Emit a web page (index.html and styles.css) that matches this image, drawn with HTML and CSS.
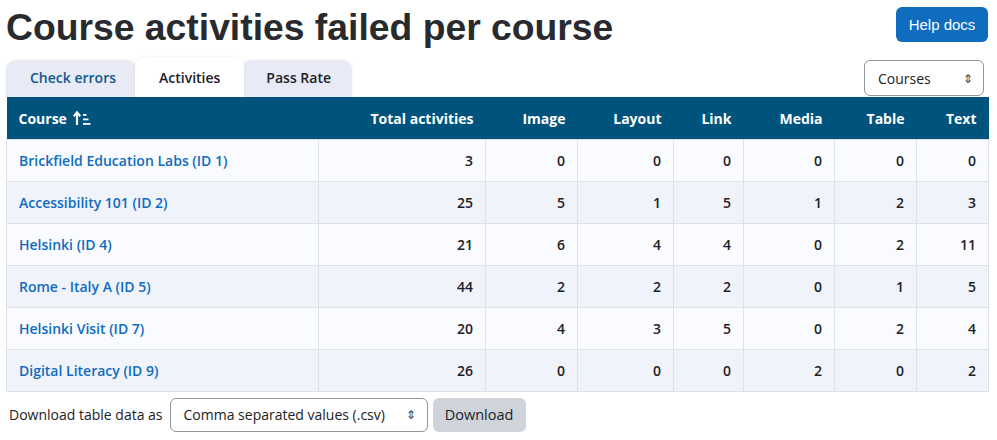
FILE: index.html
```html
<!DOCTYPE html>
<html lang="en">
<head>
    <meta charset="UTF-8">
    <title>Course activities failed per course</title>
    <link rel="stylesheet" href="styles.css">
</head>
<body>
    <div id="container">
        <div class="topbar">
            <h2>Course activities failed per course</h2>
            <button class="btnHelp">Help docs</button>
        </div>
        <div class="tabbar">
            <ul class="tabs">
                <li class="tab">Check errors</li>
                <li class="tab active">Activities</li>
                <li class="tab">Pass Rate</li>
            </ul>
            <div class="selectBox selCourses">Courses <span class="caret">&#8661;</span></div>
        </div>
        <table class="report">
            <colgroup>
                <col style="width:312px"><col style="width:167px"><col style="width:92px"><col style="width:96px">
                <col style="width:70px"><col style="width:91px"><col style="width:82px"><col>
            </colgroup>
            <thead>
                <tr>
                    <th class="first">Course
                        <svg class="sortIcon" width="20" height="15" viewBox="0 0 20 15">
                            <path d="M4 2 L4 14" stroke="#fff" stroke-width="2.2"/>
                            <path d="M0.8 5.2 L4 1.4 L7.2 5.2" fill="none" stroke="#fff" stroke-width="2.2"/>
                            <rect x="10" y="3" width="3.5" height="1.8" fill="#fff"/>
                            <rect x="10" y="7.5" width="5.5" height="1.8" fill="#fff"/>
                            <rect x="10" y="12" width="7.5" height="1.8" fill="#fff"/>
                        </svg>
                    </th>
                    <th>Total activities</th><th>Image</th><th>Layout</th><th>Link</th><th>Media</th><th>Table</th><th>Text</th>
                </tr>
            </thead>
            <tbody>
                <tr><td><a href="#">Brickfield Education Labs (ID 1)</a></td><td>3</td><td>0</td><td>0</td><td>0</td><td>0</td><td>0</td><td>0</td></tr>
                <tr><td><a href="#">Accessibility 101 (ID 2)</a></td><td>25</td><td>5</td><td>1</td><td>5</td><td>1</td><td>2</td><td>3</td></tr>
                <tr><td><a href="#">Helsinki (ID 4)</a></td><td>21</td><td>6</td><td>4</td><td>4</td><td>0</td><td>2</td><td>11</td></tr>
                <tr><td><a href="#">Rome - Italy A (ID 5)</a></td><td>44</td><td>2</td><td>2</td><td>2</td><td>0</td><td>1</td><td>5</td></tr>
                <tr><td><a href="#">Helsinki Visit (ID 7)</a></td><td>20</td><td>4</td><td>3</td><td>5</td><td>0</td><td>2</td><td>4</td></tr>
                <tr><td><a href="#">Digital Literacy (ID 9)</a></td><td>26</td><td>0</td><td>0</td><td>0</td><td>2</td><td>0</td><td>2</td></tr>
            </tbody>
        </table>
        <div class="downloadRow">
            <span class="dlLabel">Download table data as</span>
            <div class="selectBox selFormat">Comma separated values (.csv) <span class="caret">&#8661;</span></div>
            <button class="btnDownload">Download</button>
        </div>
    </div>
</body>
</html>
```
FILE: styles.css
```css
body { margin: 0; font-family: "Open Sans", "Noto Sans", sans-serif; color: #1d2125; background: #fff;}
#container { padding: 0 8px 0 6px;}
.topbar { display: flex; justify-content: space-between; align-items: flex-start; height: 57px;}
h2 {
    margin: 6px 0 0 0; font-family: "Liberation Sans", Arial, sans-serif;
    font-size: 37.3px; font-weight: bold; color: #282a2d; line-height: 42px;
}
.btnHelp {
    margin: 7px 1px 0 0; width: 92px; height: 35px;
    background-color: #0f6cbf; color: white; border: none; border-radius: 6px;
    font-family: "Liberation Sans", Arial, sans-serif; font-size: 15px;
}
.tabbar { display: flex; justify-content: space-between; align-items: flex-end; height: 40px;}
.tabs { list-style-type: none; margin: 0; padding: 0; display: flex; align-items: flex-end;}
.tab {
    height: 37px; line-height: 36px; padding: 0 21px 0 24px; margin-right: -2px;
    background-color: #e8ebf5; color: #0f5a8f; border-radius: 10px 10px 0 0;
    font-size: 14px; font-weight: 600; box-shadow: 0 0 4px rgba(0,0,0,0.06);
}
.tab:nth-child(3) { color: #1d2125;}
.tab.active {
    height: 40px; line-height: 42px; background-color: white; color: #1d2125;
    padding: 0 24px; position: relative; z-index: 1;
}
.selectBox {
    display: flex; align-items: center; justify-content: space-between;
    border: 1px solid #8f959e; border-radius: 6px; box-sizing: border-box;
    font-size: 14px; color: #1d2125; background: white;
}
.caret { font-size: 12px; color: #343a40;}
.selCourses { width: 120px; height: 36px; padding: 0 10px 0 13px; margin: 0 5px 1px 0;}
.report { width: 100%; border-collapse: collapse; table-layout: fixed;}
.report th {
    height: 42px; background-color: #00537c; color: white; text-align: right;
    font-size: 14px; font-weight: 700; padding: 1px 12px 0 12px; box-sizing: border-box;
}
.report th.first { text-align: left;}
.sortIcon { vertical-align: -2px; margin-left: 2px;}
.report td {
    height: 42px; padding: 0 12px; box-sizing: border-box; text-align: right;
    border: 1px solid #dee2e6; font-size: 14px; font-weight: 600;
}
.report td:first-child { text-align: left;}
.report tbody tr:nth-child(odd) { background-color: #f9fbfe;}
.report tbody tr:nth-child(even) { background-color: #f0f3fa;}
.report a { color: #0f6cbf; text-decoration: none;}
.downloadRow { display: flex; align-items: center; margin-top: 6px; padding-left: 3px;}
.dlLabel { font-size: 14px; margin-right: 7px;}
.selFormat { width: 258px; height: 34px; padding: 0 11px 0 13px;}
.btnDownload {
    margin-left: 5px; width: 93px; height: 34px; border: none; border-radius: 6px;
    background-color: #ced4da; color: #1d2125; font-family: "Open Sans", sans-serif; font-size: 14.5px;
}
```
